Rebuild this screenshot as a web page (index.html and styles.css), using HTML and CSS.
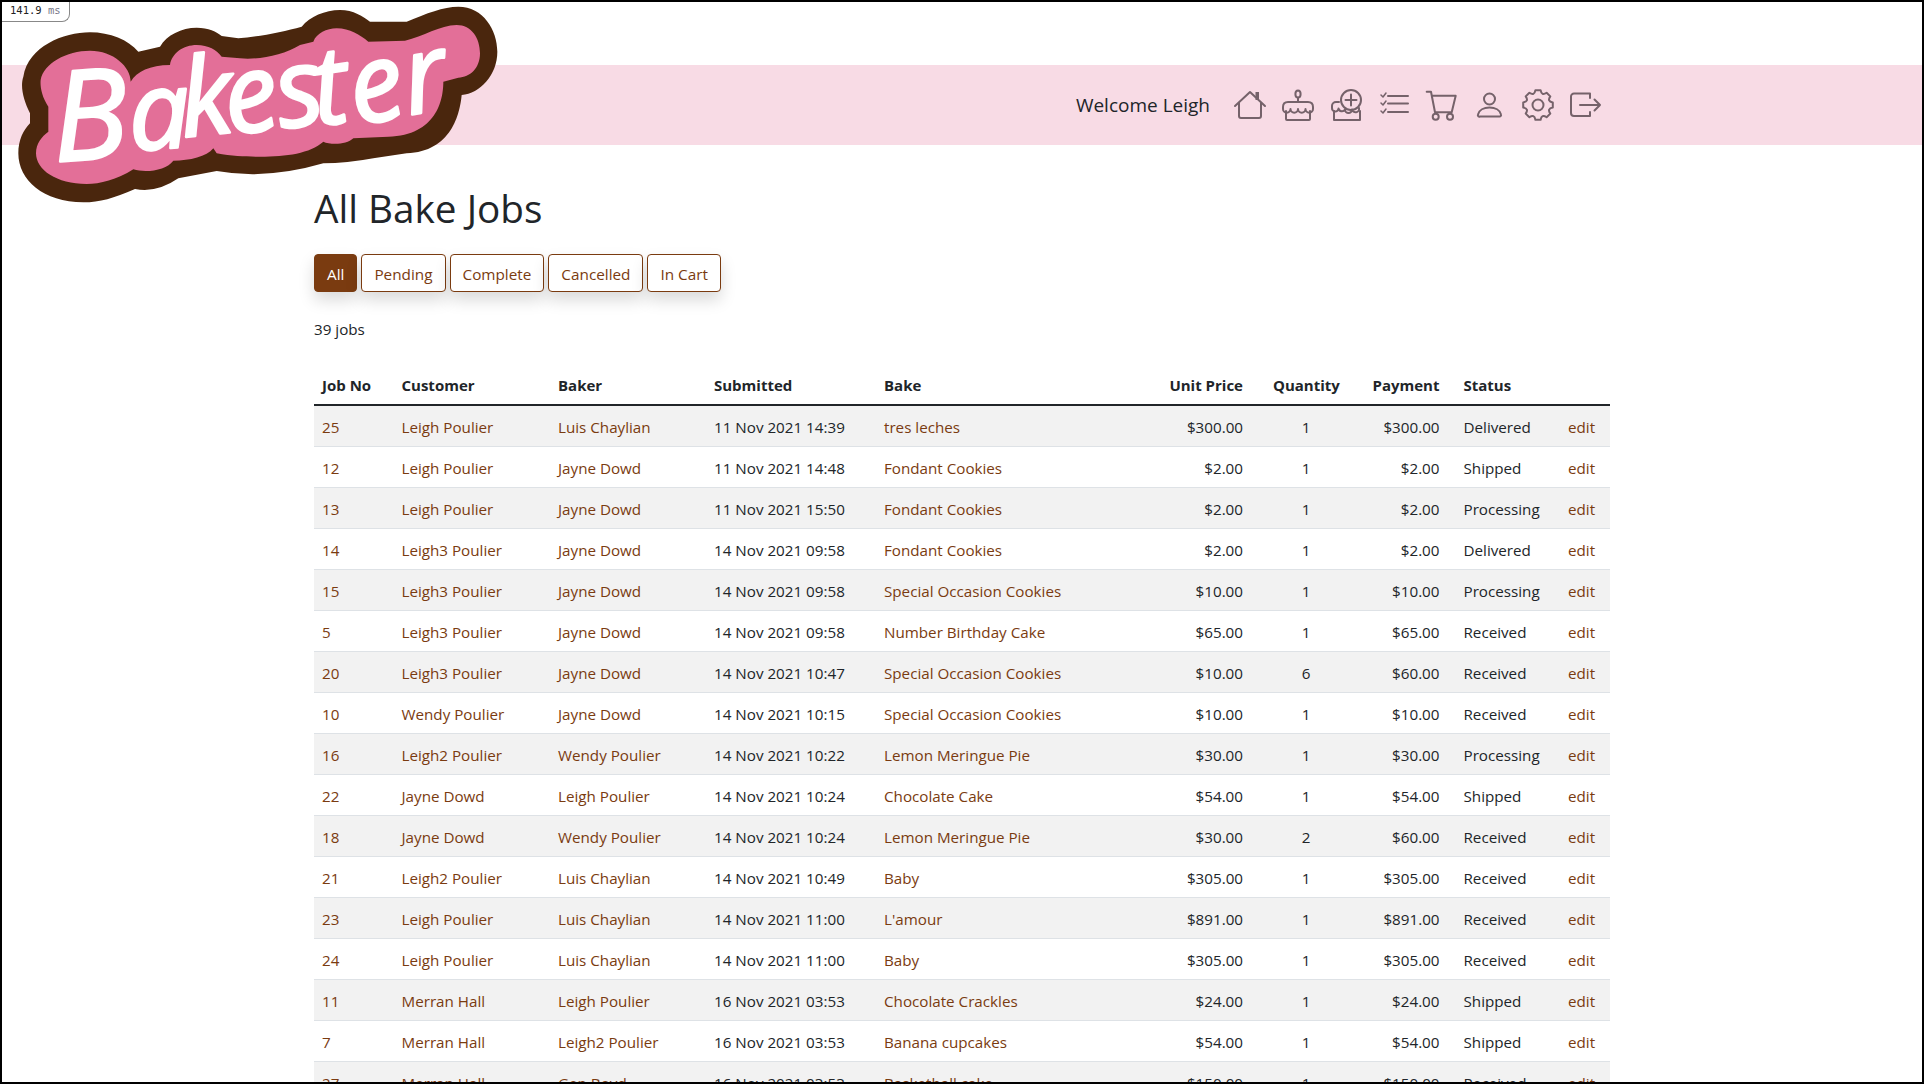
FILE: index.html
```html
<!DOCTYPE html>
<html lang="en">
<head>
<meta charset="utf-8">
<title>All Bake Jobs</title>
<link rel="stylesheet" href="styles.css">
</head>
<body>
<div class="screen">
  <div class="timer">141.9 <span class="timer-unit">ms</span></div>
  <svg class="logo" viewBox="0 0 1560 660" aria-label="Bakester">
    <path class="logo-edge" d="M90 370 L90 340 C70 300 60 260 70 230 C85 140 190 97 270 97 C330 97 385 120 415 155 L480 140 C500 105 545 83 590 83 C625 83 650 95 665 108 L715 115 C780 110 850 95 905 80 C930 50 975 30 1020 30 C1060 30 1090 50 1110 65 L1220 65 C1280 40 1330 20 1375 20 C1450 20 1492 90 1492 155 C1492 225 1440 280 1385 285 C1380 340 1355 455 1220 460 L1120 475 Q1040 490 970 490 Q800 540 650 513 L535 535 Q470 580 405 567 C340 595 300 607 250 607 C130 607 55 540 55 460 C55 420 70 390 90 370 Z"/>
    <path class="logo-fill" d="M145 395 L145 320 C125 290 120 260 122 240 C130 190 200 152 270 152 C340 152 392 200 392 245 C410 215 450 195 510 195 C515 160 550 135 590 135 C625 135 650 150 665 170 L720 175 C780 180 850 165 900 135 L940 125 C950 100 980 85 1010 85 C1050 85 1080 105 1105 125 L1215 122 C1270 110 1320 75 1370 75 C1415 75 1440 115 1440 160 C1440 205 1410 232 1375 233 L1330 245 C1330 300 1310 405 1165 410 L1060 415 C1040 435 990 435 970 425 C930 460 860 470 780 470 C740 470 700 470 650 460 L640 445 C620 470 570 482 520 482 C500 510 440 520 400 508 C350 540 300 552 260 552 C170 552 108 510 108 460 C108 430 125 410 145 395 Z"/>
    <text class="logo-word"><tspan class="logo-cap" x="165" y="485" rotate="-4">B</tspan><tspan x="392 550 690 845 950 1070 1228" y="452 412 408 388 378 378 345" rotate="-4 -6 -10 -10 -8 -12 -10">akester</tspan></text>
  </svg>

  <header class="band">
    <span class="welcome">Welcome Leigh</span>
    <nav class="icons">
      <svg class="icon" viewBox="0 0 32 32"><path d="M1 17 L16 3 L31 17"/><path d="M5 14 V27 a2 2 0 0 0 2 2 H25 a2 2 0 0 0 2 -2 V14"/><rect class="solid" x="21.5" y="3" width="3.5" height="8"/></svg>
      <svg class="icon" viewBox="0 0 32 32"><ellipse cx="16" cy="5" rx="2.6" ry="3.6"/><path d="M16 9 V13"/><path d="M1 18 C1 15 3 13 6 13 H26 C29 13 31 15 31 18 V20 A3.75 3.75 0 0 1 23.5 20 A3.75 3.75 0 0 1 16 20 A3.75 3.75 0 0 1 8.500 20 A3.75 3.75 0 0 1 1 20 Z"/><path d="M4 22 V30 a1 1 0 0 0 1 1 H27 a1 1 0 0 0 1 -1 V22"/></svg>
      <svg class="icon" viewBox="0 0 32 32"><circle cx="21" cy="11" r="10"/><path d="M21 5.500 V16.500 M15.500 11 H26.500"/><path d="M9 13 H6 a4 4 0 0 0 -4 4 V19 a3.200 3.200 0 0 0 6.500 0.500 a3.500 3.500 0 0 0 6.500 1 a3.500 3.500 0 0 0 7 0 a3.500 3.500 0 0 0 7 -1.500"/><path d="M4 22 V31 H30 V22"/></svg>
      <svg class="icon" viewBox="0 0 32 32"><path d="M10 7 H30 M10 14.500 H30 M10 23 H30"/><path class="thin" d="M3 6 L5 8 L8 4 M3 14 L5 16 L8 12 M3 22 L5 24 L8 20"/></svg>
      <svg class="icon" viewBox="0 0 32 32"><path d="M0.700 2.700 H5 L9 23.300 H25.700 L29.700 6.700 H6"/><circle cx="9.700" cy="27.700" r="3"/><circle cx="24" cy="27.700" r="3"/></svg>
      <svg class="icon" viewBox="0 0 32 32"><circle cx="15.500" cy="10" r="5.500"/><path d="M6 27.500 H25.500 a1.500 1.500 0 0 0 1.500 -2 C26 21 21 18.500 15.500 18.500 S5 21 4 25.500 a1.500 1.500 0 0 0 2 2 Z"/></svg>
      <svg class="icon" viewBox="0 0 32 32"><circle cx="16" cy="16" r="5.500"/><path d="M18.600 1.200 Q19.600 7.200 24.600 3.700 L28.300 7.400 Q24.800 12.400 30.800 13.400 V18.600 Q24.800 19.600 28.300 24.600 L24.600 28.300 Q19.600 24.800 18.600 30.800 H13.400 Q12.400 24.800 7.400 28.300 L3.700 24.600 Q7.200 19.600 1.200 18.600 V13.400 Q7.200 12.400 3.700 7.400 L7.400 3.700 Q12.400 7.200 13.400 1.200 Z"/></svg>
      <svg class="icon" viewBox="0 0 32 32"><path d="M20 9 V4.500 H4 a3 3 0 0 0 -3 3 V24 a3 3 0 0 0 3 3 H20 V23"/><path d="M10 16 H30 M24.500 10.500 L30 16 L24.500 21.500"/></svg>
    </nav>
  </header>

  <main class="page">
    <h1 class="title">All Bake Jobs</h1>
    <div class="filters">
      <a class="btn btn-on">All</a>
      <a class="btn">Pending</a>
      <a class="btn">Complete</a>
      <a class="btn">Cancelled</a>
      <a class="btn">In Cart</a>
    </div>
    <p class="count">39 jobs</p>
    <table class="jobs">
      <colgroup>
        <col class="c-no"><col class="c-customer"><col class="c-baker"><col class="c-date"><col class="c-bake"><col class="c-price"><col class="c-qty"><col class="c-pay"><col class="c-status"><col class="c-edit">
      </colgroup>
      <thead>
        <tr><th>Job No</th><th>Customer</th><th>Baker</th><th>Submitted</th><th>Bake</th><th class="price">Unit Price</th><th class="qty">Quantity</th><th class="pay">Payment</th><th>Status</th><th></th></tr>
      </thead>
      <tbody>
        <tr><td><a>25</a></td><td><a>Leigh Poulier</a></td><td><a>Luis Chaylian</a></td><td>11 Nov 2021 14:39</td><td><a>tres leches</a></td><td class="price">$300.00</td><td class="qty">1</td><td class="pay">$300.00</td><td>Delivered</td><td><a>edit</a></td></tr>
        <tr><td><a>12</a></td><td><a>Leigh Poulier</a></td><td><a>Jayne Dowd</a></td><td>11 Nov 2021 14:48</td><td><a>Fondant Cookies</a></td><td class="price">$2.00</td><td class="qty">1</td><td class="pay">$2.00</td><td>Shipped</td><td><a>edit</a></td></tr>
        <tr><td><a>13</a></td><td><a>Leigh Poulier</a></td><td><a>Jayne Dowd</a></td><td>11 Nov 2021 15:50</td><td><a>Fondant Cookies</a></td><td class="price">$2.00</td><td class="qty">1</td><td class="pay">$2.00</td><td>Processing</td><td><a>edit</a></td></tr>
        <tr><td><a>14</a></td><td><a>Leigh3 Poulier</a></td><td><a>Jayne Dowd</a></td><td>14 Nov 2021 09:58</td><td><a>Fondant Cookies</a></td><td class="price">$2.00</td><td class="qty">1</td><td class="pay">$2.00</td><td>Delivered</td><td><a>edit</a></td></tr>
        <tr><td><a>15</a></td><td><a>Leigh3 Poulier</a></td><td><a>Jayne Dowd</a></td><td>14 Nov 2021 09:58</td><td><a>Special Occasion Cookies</a></td><td class="price">$10.00</td><td class="qty">1</td><td class="pay">$10.00</td><td>Processing</td><td><a>edit</a></td></tr>
        <tr><td><a>5</a></td><td><a>Leigh3 Poulier</a></td><td><a>Jayne Dowd</a></td><td>14 Nov 2021 09:58</td><td><a>Number Birthday Cake</a></td><td class="price">$65.00</td><td class="qty">1</td><td class="pay">$65.00</td><td>Received</td><td><a>edit</a></td></tr>
        <tr><td><a>20</a></td><td><a>Leigh3 Poulier</a></td><td><a>Jayne Dowd</a></td><td>14 Nov 2021 10:47</td><td><a>Special Occasion Cookies</a></td><td class="price">$10.00</td><td class="qty">6</td><td class="pay">$60.00</td><td>Received</td><td><a>edit</a></td></tr>
        <tr><td><a>10</a></td><td><a>Wendy Poulier</a></td><td><a>Jayne Dowd</a></td><td>14 Nov 2021 10:15</td><td><a>Special Occasion Cookies</a></td><td class="price">$10.00</td><td class="qty">1</td><td class="pay">$10.00</td><td>Received</td><td><a>edit</a></td></tr>
        <tr><td><a>16</a></td><td><a>Leigh2 Poulier</a></td><td><a>Wendy Poulier</a></td><td>14 Nov 2021 10:22</td><td><a>Lemon Meringue Pie</a></td><td class="price">$30.00</td><td class="qty">1</td><td class="pay">$30.00</td><td>Processing</td><td><a>edit</a></td></tr>
        <tr><td><a>22</a></td><td><a>Jayne Dowd</a></td><td><a>Leigh Poulier</a></td><td>14 Nov 2021 10:24</td><td><a>Chocolate Cake</a></td><td class="price">$54.00</td><td class="qty">1</td><td class="pay">$54.00</td><td>Shipped</td><td><a>edit</a></td></tr>
        <tr><td><a>18</a></td><td><a>Jayne Dowd</a></td><td><a>Wendy Poulier</a></td><td>14 Nov 2021 10:24</td><td><a>Lemon Meringue Pie</a></td><td class="price">$30.00</td><td class="qty">2</td><td class="pay">$60.00</td><td>Received</td><td><a>edit</a></td></tr>
        <tr><td><a>21</a></td><td><a>Leigh2 Poulier</a></td><td><a>Luis Chaylian</a></td><td>14 Nov 2021 10:49</td><td><a>Baby</a></td><td class="price">$305.00</td><td class="qty">1</td><td class="pay">$305.00</td><td>Received</td><td><a>edit</a></td></tr>
        <tr><td><a>23</a></td><td><a>Leigh Poulier</a></td><td><a>Luis Chaylian</a></td><td>14 Nov 2021 11:00</td><td><a>L'amour</a></td><td class="price">$891.00</td><td class="qty">1</td><td class="pay">$891.00</td><td>Received</td><td><a>edit</a></td></tr>
        <tr><td><a>24</a></td><td><a>Leigh Poulier</a></td><td><a>Luis Chaylian</a></td><td>14 Nov 2021 11:00</td><td><a>Baby</a></td><td class="price">$305.00</td><td class="qty">1</td><td class="pay">$305.00</td><td>Received</td><td><a>edit</a></td></tr>
        <tr><td><a>11</a></td><td><a>Merran Hall</a></td><td><a>Leigh Poulier</a></td><td>16 Nov 2021 03:53</td><td><a>Chocolate Crackles</a></td><td class="price">$24.00</td><td class="qty">1</td><td class="pay">$24.00</td><td>Shipped</td><td><a>edit</a></td></tr>
        <tr><td><a>7</a></td><td><a>Merran Hall</a></td><td><a>Leigh2 Poulier</a></td><td>16 Nov 2021 03:53</td><td><a>Banana cupcakes</a></td><td class="price">$54.00</td><td class="qty">1</td><td class="pay">$54.00</td><td>Shipped</td><td><a>edit</a></td></tr>
        <tr><td><a>27</a></td><td><a>Merran Hall</a></td><td><a>Gen Boyd</a></td><td>16 Nov 2021 03:53</td><td><a>Basketball cake</a></td><td class="price">$150.00</td><td class="qty">1</td><td class="pay">$150.00</td><td>Received</td><td><a>edit</a></td></tr>
      </tbody>
    </table>
  </main>
</div>
</body>
</html>
```

FILE: styles.css
```css
* { box-sizing: border-box; }
html, body { margin: 0; padding: 0; }
body { font-family: "Open Sans", "Noto Sans", sans-serif; font-size: 15.200px; line-height: 24px; color: #212529; background: #fff; }
.screen { position: relative; height: 100vh; border: 2px solid #000; overflow: hidden; background: #fff; }

.timer { position: absolute; top: 0; left: 0; z-index: 3; width: 68px; height: 20px; padding-left: 8px; font-family: "DejaVu Sans Mono", "Liberation Mono", monospace; font-size: 10.500px; line-height: 17px; color: #222; background: #fff; border-right: 1px solid #888; border-bottom: 1px solid #888; border-bottom-right-radius: 8px; }
.timer-unit { color: #778; }

.logo { position: absolute; top: -2px; left: -2px; z-index: 2; width: 520px; height: 220px; overflow: visible; }
.logo-edge { fill: #4a260d; }
.logo-fill { fill: #e36f98; }
.logo-word { font-family: "Open Sans", sans-serif; font-style: italic; font-size: 325px; fill: #fff; stroke: #fff; stroke-width: 8px; stroke-linejoin: round; }
.logo-cap { font-size: 375px; }

.band { display: flex; align-items: center; justify-content: flex-end; height: 80px; margin-top: 63px; padding-right: 320px; background: #f8dbe5; }
.welcome { margin-right: 24px; font-size: 19px; color: #212529; }
.icons { display: flex; gap: 16px; }
.icon { display: block; width: 32px; height: 32px; overflow: visible; fill: none; stroke: #75626a; stroke-width: 2; stroke-linecap: round; stroke-linejoin: round; }
.icon .solid { fill: #75626a; stroke: none; }
.icon .thin { stroke-width: 1.500; }

.page { width: 1320px; margin: 0 auto; padding: 39px 12px 0; }
.title { margin: 0 0 22px; font-size: 38.700px; line-height: 48px; font-weight: 400; color: #212529; }
.filters { display: flex; gap: 4px; }
.btn { display: block; padding: 7px 12px 5px; height: 38px; font-size: 15.300px; line-height: 24px; color: #7a3b10; background: #fff; border: 1px solid #7a3b10; border-radius: 4px; box-shadow: 0 8px 16px rgba(0, 0, 0, .15); }
.btn-on { color: #fff; background: #7a3b10; }
.count { margin: 25px 0 24px; }

.jobs { width: 1296px; table-layout: fixed; border-collapse: collapse; }
.c-no { width: 79.500px; }
.c-customer { width: 156.500px; }
.c-baker { width: 156px; }
.c-date { width: 170px; }
.c-bake { width: 264px; }
.c-price { width: 125px; }
.c-qty { width: 82px; }
.c-pay { width: 108.500px; }
.c-status { width: 104.500px; }
.c-edit { width: 50px; }
.jobs th, .jobs td { text-align: left; white-space: nowrap; }
.jobs th { padding: 8px 8px 7px; font-size: 15px; font-weight: 700; border-bottom: 2px solid #212529; }
.jobs td { padding: 9px 8px 7px; border-bottom: 1px solid #dee2e6; }
.jobs tbody tr:nth-child(odd) td { background: #f2f2f2; }
.jobs a { color: #7a3b10; }
.jobs .price { text-align: right; padding-right: 22px; }
.jobs .qty { text-align: center; }
.jobs .pay { text-align: right; padding-right: 16px; }
```
